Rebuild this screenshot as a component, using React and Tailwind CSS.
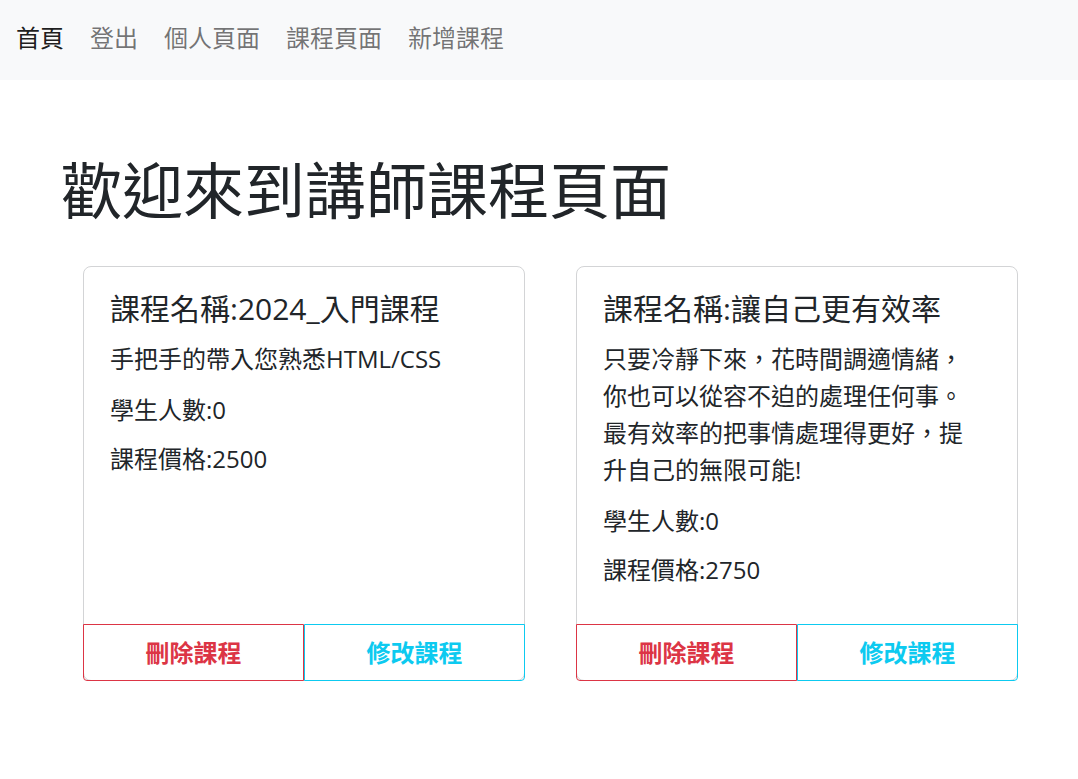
import React from 'react';

const courses = [
    {
        id: 1,
        title: "2024_入門課程",
        description: "手把手的帶入您熟悉HTML/CSS",
        students: 0,
        price: 2500
    },
    {
        id: 2,
        title: "讓自己更有效率",
        description: "只要冷靜下來，花時間調適情緒，你也可以從容不迫的處理任何事。最有效率的把事情處理得更好，提升自己的無限可能!",
        students: 0,
        price: 2750
    }
];

const navLinks = ["首頁", "登出", "個人頁面", "課程頁面", "新增課程"];

const App = () => {
    return (
        <div className="min-h-screen bg-white text-[#212529]" style={{ fontFamily: '"Open Sans", "Noto Sans CJK TC", sans-serif' }}>
            {/* Navbar */}
            <nav className="h-[80px] bg-[#f8f9fa] flex items-center pl-[3px] pb-[4px]">
                {navLinks.map((link, i) => (
                    <a
                        key={link}
                        href="#"
                        className={`px-[13px] text-[24px] leading-[36px] ${i === 0 ? 'text-black/90' : 'text-black/55'}`}
                    >
                        {link}
                    </a>
                ))}
            </nav>

            <main className="pl-[61px] pr-[60px]">
                <h1 className="mt-[75px] text-[61px] leading-[72px] font-normal">歡迎來到講師課程頁面</h1>

                <div className="mt-[39px] ml-[22px] flex gap-[51px]">
                    {courses.map(course => (
                        <div key={course.id} className="w-[442px] flex flex-col border border-[#d3d4d6] rounded-[8px] bg-white">
                            <div className="flex-grow px-[26px] pt-[24px] pb-[36px]">
                                <h5 className="text-[30px] leading-[36px] mb-[13px]">課程名稱:{course.title}</h5>
                                <p className="text-[24px] leading-[37px] mb-[15px] max-w-[372px]">{course.description}</p>
                                <p className="text-[24px] leading-[36px] mb-[13px]">學生人數:{course.students}</p>
                                <p className="text-[24px] leading-[36px]">課程價格:{course.price}</p>
                            </div>
                            <div className="flex -mx-px -mb-px">
                                <button className="w-1/2 h-[57px] border border-[#dc3545] text-[#dc3545] text-[24px] font-bold rounded-bl-[4px]">
                                    刪除課程
                                </button>
                                <button className="w-1/2 h-[57px] border border-[#0dcaf0] text-[#0dcaf0] text-[24px] font-bold rounded-br-[4px]">
                                    修改課程
                                </button>
                            </div>
                        </div>
                    ))}
                </div>
            </main>
        </div>
    );
};

export default App;
